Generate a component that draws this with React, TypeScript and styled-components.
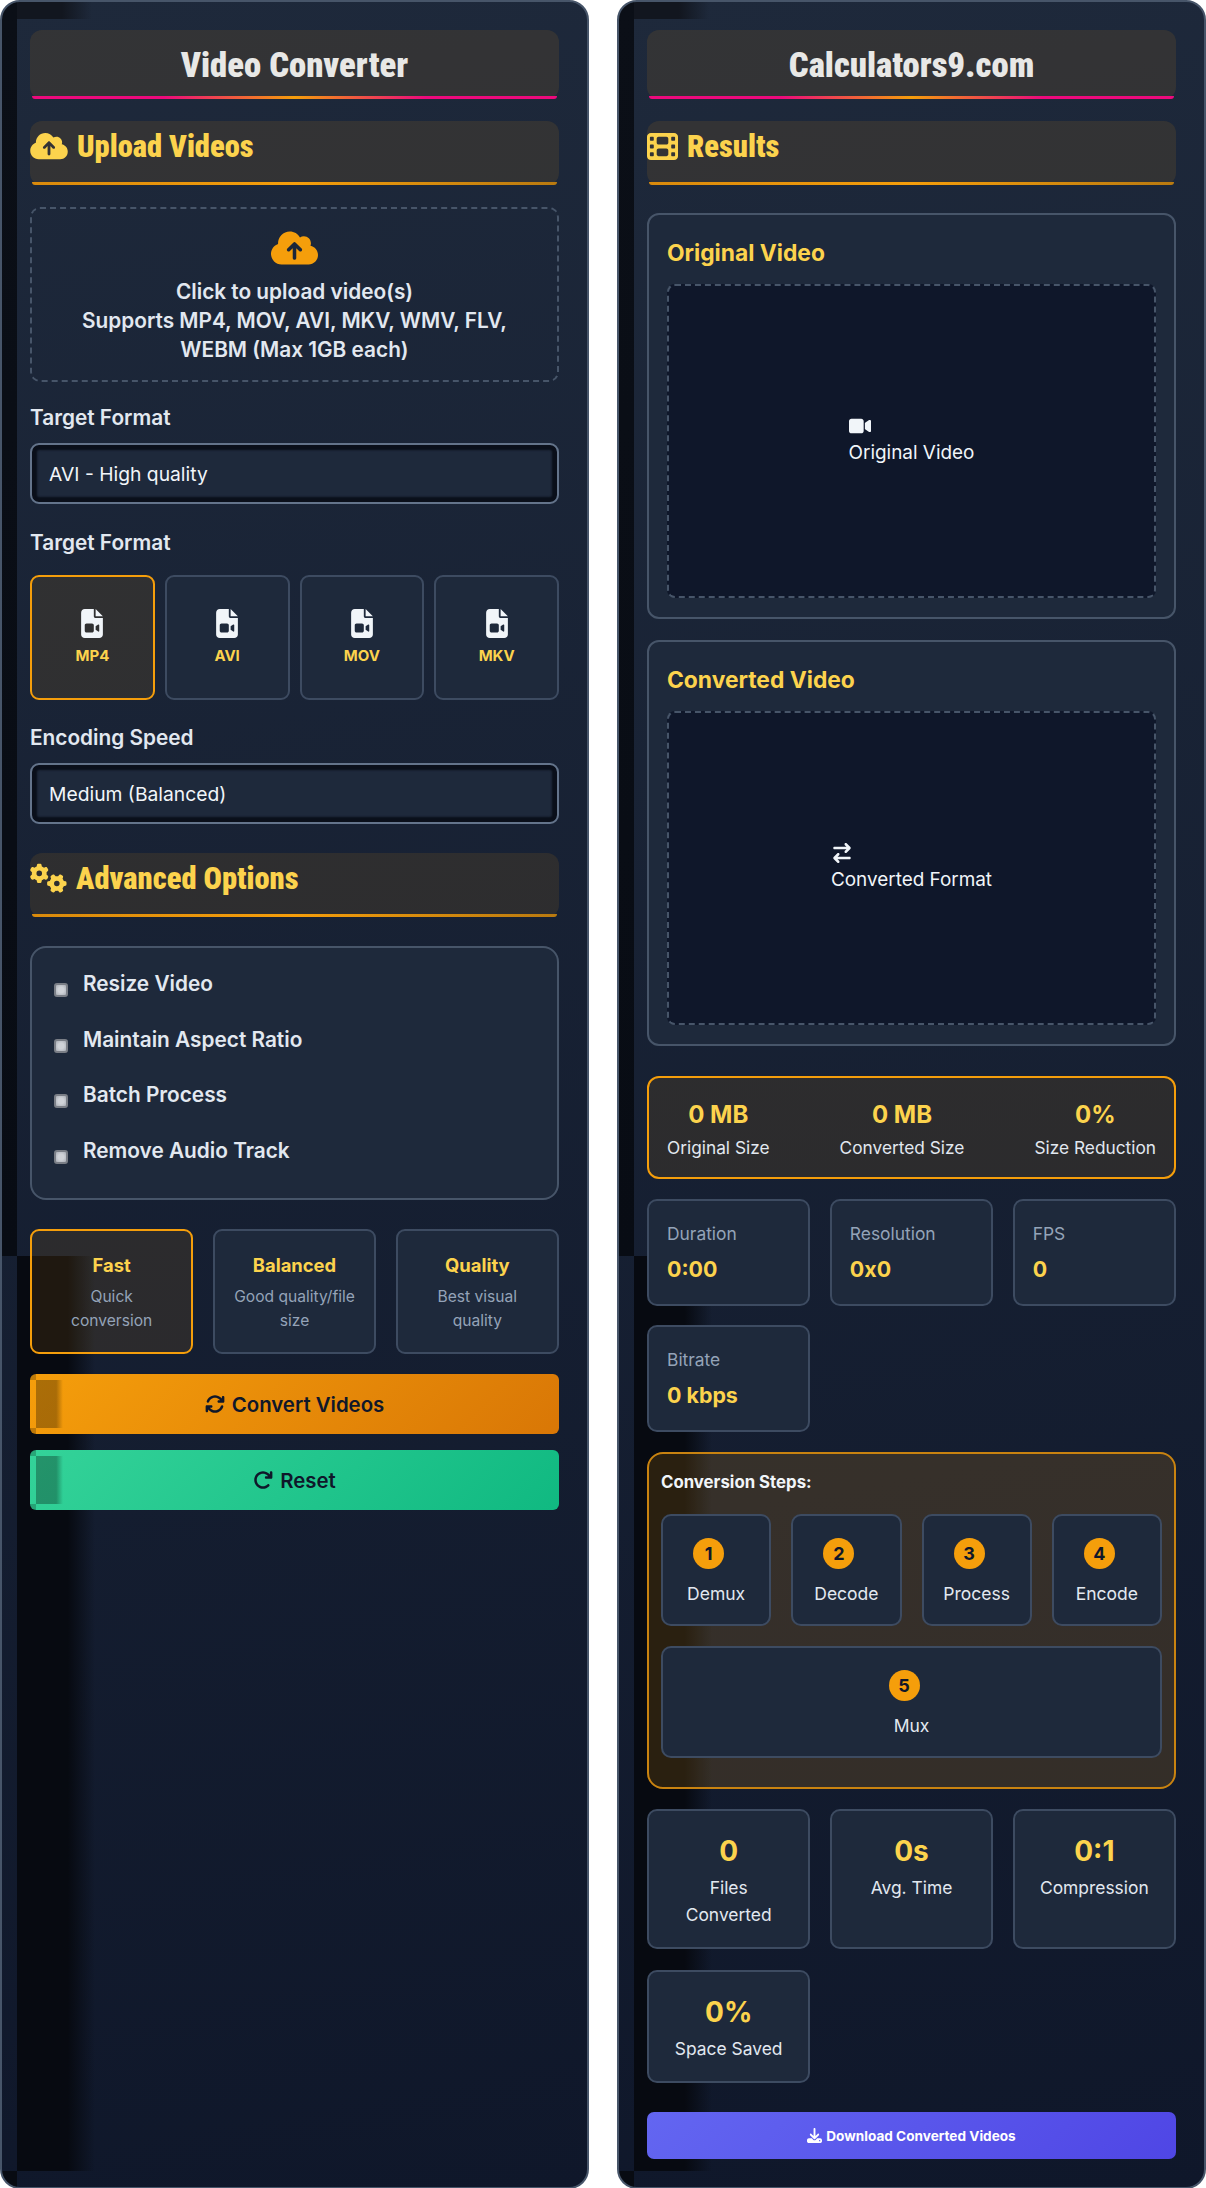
import React from 'react';
import styled, { createGlobalStyle } from 'styled-components';
import {
    FaCloudArrowUp, FaFilm, FaGears, FaFileVideo, FaVideo, FaArrowRightArrowLeft,
    FaArrowsRotate, FaArrowRotateRight, FaDownload
} from 'react-icons/fa6';

const GlobalStyle = createGlobalStyle`
    * { box-sizing: border-box; }
    html, body { margin: 0; padding: 0; background: #fff; }
    body { font-family: Inter, "Liberation Sans", sans-serif; color: #e2e8f0; }
`;

const gold = '#fcd34d';
const amber = '#f59e0b';
const tint = 'rgba(245, 158, 11, 0.1)';

const Page = styled.div`
    display: grid;
    grid-template-columns: 589px 589px;
    gap: 28px;
    width: 1206px;
    height: 2188px;
`;

const Panel = styled.section`
    border: 2px solid #475569;
    border-radius: 20px;
    padding: 28px;
    background:
        linear-gradient(#0b0f17, #080c14) 0 0 / 15px 1254px no-repeat,
        linear-gradient(90deg, #12161f 60%, transparent) 15px 0 / 75px 17px no-repeat,
        linear-gradient(90deg, #070a11 65%, transparent) 15px 1254px / 78px 915px no-repeat,
        linear-gradient(#080b12, #080b12) 0 2169px / 15px 20px no-repeat,
        linear-gradient(170deg, #1e293b 0%, #0f172a 100%);
`;

const TitleBar = styled.div`
    position: relative;
    height: 69px;
    margin-bottom: 22px;
    border-radius: 12px;
    background: ${tint};
    display: flex;
    align-items: center;
    justify-content: center;
    &::after {
        content: "";
        position: absolute;
        left: 2px;
        right: 2px;
        bottom: 0;
        height: 3px;
        border-radius: 0 0 8px 8px;
        background: linear-gradient(90deg, #ec0a7c, #ec0a7c 25%, ${amber} 50%, #ec0a7c 75%, #ec0a7c);
    }
`;

const TitleText = styled.h1`
    margin: 0;
    font-family: Roboto, "Liberation Sans", sans-serif;
    font-size: 34.7px;
    font-weight: 900;
    font-stretch: 75%;
    color: #e8e8e6;
`;

const SectionBar = styled.div<{ $after: number }>`
    position: relative;
    height: 64px;
    margin-bottom: ${p => p.$after}px;
    padding-bottom: 14px;
    border-radius: 12px;
    background: ${tint};
    display: flex;
    align-items: center;
    gap: 9px;
    color: ${gold};
    &::after {
        content: "";
        position: absolute;
        left: 2px;
        right: 2px;
        bottom: 0;
        height: 3px;
        border-radius: 0 0 8px 8px;
        background: linear-gradient(90deg, #d98a0c, ${amber} 50%, #b97a10);
    }
`;

const SectionText = styled.h2`
    margin: 0;
    font-family: Roboto, "Liberation Sans", sans-serif;
    font-size: 30.5px;
    font-weight: 900;
    font-stretch: 75%;
`;

const UploadBox = styled.div`
    height: 175px;
    margin-bottom: 21px;
    padding: 20px 20px 0;
    border: 2px dashed #475569;
    border-radius: 10px;
    text-align: center;
    font-size: 20.8px;
    font-weight: 600;
    line-height: 29px;
    svg {
        display: block;
        width: 47px;
        height: 38px;
        margin: 0 auto 10px;
        color: ${amber};
    }
`;

const Label = styled.div<{ $after: number }>`
    font-size: 20.8px;
    font-weight: 600;
    line-height: 29px;
    margin-bottom: ${p => p.$after}px;
`;

const Select = styled.select<{ $after: number }>`
    display: block;
    width: 100%;
    height: 61px;
    margin-bottom: ${p => p.$after}px;
    padding: 0 17px;
    appearance: none;
    border: 2px solid #64748b;
    border-radius: 9px;
    background: #1e293b;
    box-shadow: inset 0 0 2px 5px #0a0f1a;
    color: #f1f5f9;
    font-family: inherit;
    font-size: 19.3px;
    outline: none;
`;

const FormatGrid = styled.div`
    display: grid;
    grid-template-columns: repeat(4, 1fr);
    gap: 10px;
    margin-bottom: 23px;
`;

const FormatCard = styled.div<{ $active?: boolean }>`
    height: 125px;
    padding-top: 32px;
    border: 2px solid ${p => (p.$active ? amber : '#3d4b61')};
    border-radius: 9px;
    background: ${p => (p.$active ? tint : '#1e293b')};
    display: flex;
    flex-direction: column;
    align-items: center;
    gap: 7px;
    color: ${gold};
    font-size: 15px;
    font-weight: 700;
    line-height: 21px;
    svg {
        width: 22px;
        height: 29px;
        color: #f1f5f9;
    }
`;

const OptionsBox = styled.div`
    height: 254px;
    margin-bottom: 29px;
    padding: 22px 22px 0;
    border: 2px solid #475569;
    border-radius: 16px;
    background: #1e293b;
    display: flex;
    flex-direction: column;
    gap: 27.7px;
`;

const OptionRow = styled.label`
    display: flex;
    align-items: flex-start;
    gap: 15px;
    font-size: 20.8px;
    font-weight: 600;
    line-height: 28px;
`;

const Check = styled.input`
    appearance: none;
    flex: none;
    width: 14px;
    height: 14px;
    margin: 13px 0 0;
    border: 2.5px solid #7a7e86;
    border-radius: 3px;
    background: radial-gradient(#cfd2d7 40%, #a8acb4);
`;

const PresetGrid = styled.div`
    display: grid;
    grid-template-columns: repeat(3, 1fr);
    gap: 19.5px;
    margin-bottom: 20px;
`;

const PresetCard = styled.div<{ $active?: boolean }>`
    height: 125px;
    padding: 20px 18.5px;
    border: 2px solid ${p => (p.$active ? amber : '#3d4b61')};
    border-radius: 9px;
    background: ${p => (p.$active ? tint : '#1e293b')};
    text-align: center;
`;

const PresetName = styled.div`
    color: ${gold};
    font-size: 18.4px;
    font-weight: 700;
    line-height: 29px;
    margin-bottom: 5px;
`;

const PresetNote = styled.div`
    color: #94a3b8;
    font-size: 15.6px;
    line-height: 24px;
`;

const ActionButton = styled.button<{ $from: string; $to: string; $after: number }>`
    display: flex;
    align-items: center;
    justify-content: center;
    gap: 7px;
    width: 100%;
    height: 60px;
    margin-bottom: ${p => p.$after}px;
    border: none;
    border-radius: 6px;
    color: #0f172a;
    font-family: inherit;
    font-size: 20.4px;
    font-weight: 600;
    background:
        linear-gradient(90deg, rgba(0, 0, 0, 0.3) 75%, transparent) 6px 6px / 27px calc(100% - 12px) no-repeat,
        linear-gradient(rgba(0, 0, 0, 0.22), rgba(0, 0, 0, 0.22)) 0 0 / 6px 6px no-repeat,
        linear-gradient(rgba(0, 0, 0, 0.22), rgba(0, 0, 0, 0.22)) 0 100% / 6px 6px no-repeat,
        linear-gradient(135deg, ${p => p.$from}, ${p => p.$to});
    svg {
        width: 20px;
        height: 20px;
    }
`;

const VideoCard = styled.div<{ $after: number }>`
    margin-bottom: ${p => p.$after}px;
    padding: 22px 18px 19px;
    border: 2px solid #475569;
    border-radius: 12px;
    background: #1e293b;
`;

const VideoTitle = styled.h3`
    margin: 0 0 16px;
    color: ${gold};
    font-size: 22.8px;
    font-weight: 700;
    line-height: 31px;
`;

const VideoFrame = styled.div`
    height: 314px;
    border: 2px dashed #475569;
    border-radius: 8px;
    background: #0f172a;
    display: flex;
    align-items: center;
    justify-content: center;
`;

const Placeholder = styled.div`
    display: flex;
    flex-direction: column;
    align-items: flex-start;
    gap: 4px;
    color: #f1f5f9;
    font-size: 18.9px;
    line-height: 26px;
    svg {
        width: 22px;
        height: 20px;
    }
`;

const SummaryBox = styled.div`
    display: flex;
    justify-content: space-between;
    height: 103px;
    margin-bottom: 20px;
    padding: 20px 18px 0;
    border: 2px solid ${amber};
    border-radius: 12px;
    background: ${tint};
    text-align: center;
`;

const SummaryValue = styled.div`
    color: ${gold};
    font-size: 24px;
    font-weight: 700;
    line-height: 34px;
    margin-bottom: 2.5px;
`;

const SummaryLabel = styled.div`
    color: #e2e8f0;
    font-size: 17.3px;
    line-height: 25px;
`;

const CardGrid = styled.div<{ $after: number; $rowGap: number }>`
    display: grid;
    grid-template-columns: repeat(3, 1fr);
    column-gap: 19.5px;
    row-gap: ${p => p.$rowGap}px;
    margin-bottom: ${p => p.$after}px;
`;

const StatCard = styled.div`
    height: 107px;
    padding: 20px 18px;
    border: 2px solid #3d4b61;
    border-radius: 10px;
    background: #1e293b;
`;

const StatLabel = styled.div`
    color: #94a3b8;
    font-size: 17.4px;
    line-height: 26px;
    margin-bottom: 6.5px;
`;

const StatValue = styled.div`
    color: ${gold};
    font-size: 21.4px;
    font-weight: 700;
    line-height: 31px;
`;

const StepsBox = styled.div`
    height: 337px;
    margin-bottom: 20px;
    padding: 15px 12px 0;
    border: 2px solid #c98310;
    border-radius: 16px;
    background: rgba(245, 158, 11, 0.15);
`;

const StepsTitle = styled.div`
    color: #f1f5f9;
    font-size: 16.8px;
    font-weight: 700;
    line-height: 26px;
    margin-bottom: 19px;
`;

const StepsWrap = styled.div`
    display: flex;
    flex-wrap: wrap;
    gap: 20px;
`;

const StepCard = styled.div`
    flex: 1 1 100px;
    height: 112px;
    padding-top: 22px;
    border: 2px solid #3d4b61;
    border-radius: 10px;
    background: #1e293b;
    display: flex;
    flex-direction: column;
    align-items: center;
    color: #e2e8f0;
    font-size: 17.5px;
    line-height: 25px;
`;

const StepNumber = styled.div`
    flex: none;
    width: 31px;
    height: 31px;
    margin: 0 15px 11.5px 0;
    border-radius: 50%;
    background: ${amber};
    color: #0f172a;
    display: flex;
    align-items: center;
    justify-content: center;
    font-size: 18px;
    font-weight: 700;
`;

const PerfCard = styled.div`
    padding: 20px 20px 19.5px;
    border: 2px solid #3d4b61;
    border-radius: 10px;
    background: #1e293b;
    text-align: center;
`;

const PerfValue = styled.div`
    color: ${gold};
    font-size: 28px;
    font-weight: 700;
    line-height: 40px;
    margin-bottom: 2.5px;
`;

const PerfLabel = styled.div`
    color: #e2e8f0;
    font-size: 17.4px;
    line-height: 27px;
`;

const DownloadButton = styled.button`
    display: flex;
    align-items: center;
    justify-content: center;
    gap: 4px;
    width: 100%;
    height: 47px;
    border: none;
    border-radius: 7px;
    background: linear-gradient(135deg, #6366f1, #4f46e5);
    color: #fff;
    font-family: inherit;
    font-size: 13.6px;
    font-weight: 700;
    svg {
        width: 15px;
        height: 15px;
    }
`;

const BarIcon = styled.span<{ $w: number; $h: number }>`
    display: flex;
    flex: none;
    svg {
        width: ${p => p.$w}px;
        height: ${p => p.$h}px;
    }
`;

const formats = ['MP4', 'AVI', 'MOV', 'MKV'];
const options = ['Resize Video', 'Maintain Aspect Ratio', 'Batch Process', 'Remove Audio Track'];
const presets = [
    { name: 'Fast', note: 'Quick conversion', active: true },
    { name: 'Balanced', note: 'Good quality/file size' },
    { name: 'Quality', note: 'Best visual quality' }
];
const summary = [
    { value: '0 MB', label: 'Original Size' },
    { value: '0 MB', label: 'Converted Size' },
    { value: '0%', label: 'Size Reduction' }
];
const stats = [
    { label: 'Duration', value: '0:00' },
    { label: 'Resolution', value: '0x0' },
    { label: 'FPS', value: '0' },
    { label: 'Bitrate', value: '0 kbps' }
];
const steps = ['Demux', 'Decode', 'Process', 'Encode', 'Mux'];
const perf = [
    { value: '0', label: 'Files Converted' },
    { value: '0s', label: 'Avg. Time' },
    { value: '0:1', label: 'Compression' },
    { value: '0%', label: 'Space Saved' }
];

export default function App() {
    return (
        <>
            <GlobalStyle />
            <Page>
                <Panel>
                    <TitleBar><TitleText>Video Converter</TitleText></TitleBar>
                    <SectionBar $after={22}>
                        <BarIcon $w={38} $h={30}><FaCloudArrowUp /></BarIcon>
                        <SectionText>Upload Videos</SectionText>
                    </SectionBar>
                    <UploadBox>
                        <FaCloudArrowUp />
                        Click to upload video(s)<br />
                        Supports MP4, MOV, AVI, MKV, WMV, FLV, WEBM (Max 1GB each)
                    </UploadBox>

                    <Label $after={11}>Target Format</Label>
                    <Select $after={24} defaultValue="avi">
                        <option value="avi">AVI - High quality</option>
                    </Select>

                    <Label $after={18}>Target Format</Label>
                    <FormatGrid>
                        {formats.map((name, index) =>
                            <FormatCard key={name} $active={index === 0}>
                                <FaFileVideo />
                                {name}
                            </FormatCard>
                        )}
                    </FormatGrid>

                    <Label $after={11}>Encoding Speed</Label>
                    <Select $after={29} defaultValue="medium">
                        <option value="medium">Medium (Balanced)</option>
                    </Select>

                    <SectionBar $after={29}>
                        <BarIcon $w={37} $h={30}><FaGears /></BarIcon>
                        <SectionText>Advanced Options</SectionText>
                    </SectionBar>
                    <OptionsBox>
                        {options.map(option =>
                            <OptionRow key={option}>
                                <Check type="checkbox" />
                                {option}
                            </OptionRow>
                        )}
                    </OptionsBox>

                    <PresetGrid>
                        {presets.map(preset =>
                            <PresetCard key={preset.name} $active={preset.active}>
                                <PresetName>{preset.name}</PresetName>
                                <PresetNote>{preset.note}</PresetNote>
                            </PresetCard>
                        )}
                    </PresetGrid>

                    <ActionButton $from="#f59e0b" $to="#d97706" $after={16}>
                        <FaArrowsRotate /> Convert Videos
                    </ActionButton>
                    <ActionButton $from="#34d399" $to="#10b981" $after={0}>
                        <FaArrowRotateRight /> Reset
                    </ActionButton>
                </Panel>

                <Panel>
                    <TitleBar><TitleText>Calculators9.com</TitleText></TitleBar>
                    <SectionBar $after={28}>
                        <BarIcon $w={31} $h={31}><FaFilm /></BarIcon>
                        <SectionText>Results</SectionText>
                    </SectionBar>

                    <VideoCard $after={21}>
                        <VideoTitle>Original Video</VideoTitle>
                        <VideoFrame>
                            <Placeholder><FaVideo />Original Video</Placeholder>
                        </VideoFrame>
                    </VideoCard>
                    <VideoCard $after={30}>
                        <VideoTitle>Converted Video</VideoTitle>
                        <VideoFrame>
                            <Placeholder><FaArrowRightArrowLeft />Converted Format</Placeholder>
                        </VideoFrame>
                    </VideoCard>

                    <SummaryBox>
                        {summary.map(item =>
                            <div key={item.label}>
                                <SummaryValue>{item.value}</SummaryValue>
                                <SummaryLabel>{item.label}</SummaryLabel>
                            </div>
                        )}
                    </SummaryBox>

                    <CardGrid $after={20} $rowGap={19}>
                        {stats.map(stat =>
                            <StatCard key={stat.label}>
                                <StatLabel>{stat.label}</StatLabel>
                                <StatValue>{stat.value}</StatValue>
                            </StatCard>
                        )}
                    </CardGrid>

                    <StepsBox>
                        <StepsTitle>Conversion Steps:</StepsTitle>
                        <StepsWrap>
                            {steps.map((step, index) =>
                                <StepCard key={step}>
                                    <StepNumber>{index + 1}</StepNumber>
                                    {step}
                                </StepCard>
                            )}
                        </StepsWrap>
                    </StepsBox>

                    <CardGrid $after={29} $rowGap={21}>
                        {perf.map(item =>
                            <PerfCard key={item.label}>
                                <PerfValue>{item.value}</PerfValue>
                                <PerfLabel>{item.label}</PerfLabel>
                            </PerfCard>
                        )}
                    </CardGrid>

                    <DownloadButton><FaDownload /> Download Converted Videos</DownloadButton>
                </Panel>
            </Page>
        </>
    );
}
